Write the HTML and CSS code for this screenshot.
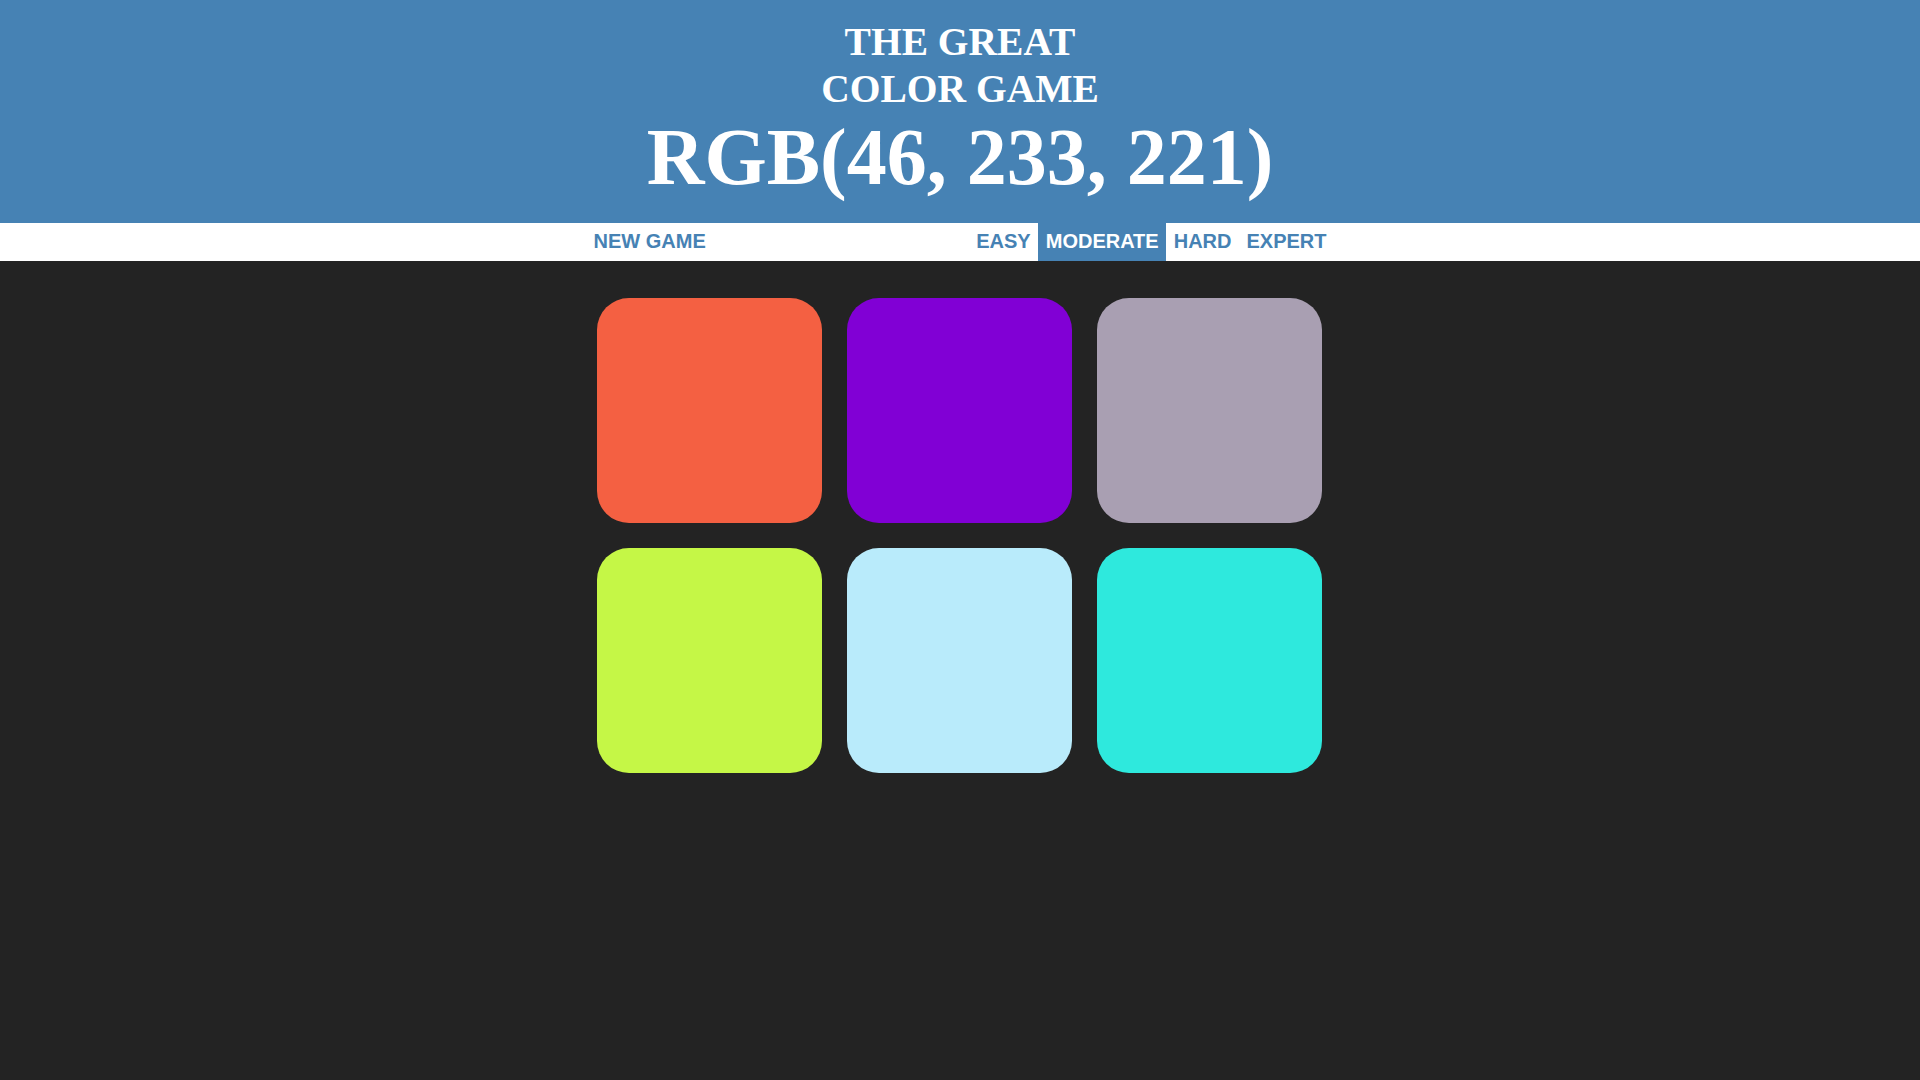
FILE: index.html
```html
<!DOCTYPE html>
<html lang="en">
<head>
<meta charset="utf-8">
<title>The Great Color Game</title>
<link rel="stylesheet" href="styles.css">
</head>
<body>
<header class="header">
  <h1 class="title">THE GREAT<br>COLOR GAME</h1>
  <div class="rgb">RGB(46, 233, 221)</div>
</header>
<nav class="stripe">
  <div class="stripe-inner">
    <button class="btn">NEW GAME</button>
    <span class="spacer"></span>
    <button class="btn">EASY</button>
    <button class="btn selected">MODERATE</button>
    <button class="btn">HARD</button>
    <button class="btn">EXPERT</button>
  </div>
</nav>
<main class="board">
  <div class="square sq-orange"></div>
  <div class="square sq-purple"></div>
  <div class="square sq-grey"></div>
  <div class="square sq-lime"></div>
  <div class="square sq-sky"></div>
  <div class="square sq-cyan"></div>
</main>
</body>
</html>
```
FILE: styles.css
```css
html, body {
  margin: 0;
  padding: 0;
}
body {
  background: #232323;
  min-height: 100vh;
}
.header {
  background: #4682b4;
  color: #ffffff;
  text-align: center;
  padding: 19px 0 22px;
  font-family: "Liberation Serif", "Times New Roman", serif;
  font-weight: bold;
}
.title {
  margin: 0;
  font-size: 39.5px;
  line-height: 47px;
  font-weight: bold;
}
.rgb {
  font-size: 80px;
  line-height: 88px;
}
.stripe {
  background: #ffffff;
  height: 38px;
}
.stripe-inner {
  width: 748px;
  margin: 0 auto;
  height: 38px;
  display: flex;
  align-items: stretch;
}
.spacer {
  flex: 1;
}
.btn {
  border: none;
  background: none;
  margin: 0;
  padding: 0 7.5px 2px;
  font-family: "Liberation Sans", Arial, sans-serif;
  font-weight: bold;
  font-size: 20px;
  line-height: 36px;
  height: 38px;
  color: #4682b4;
  cursor: pointer;
}
.btn.selected {
  background: #4682b4;
  color: #ffffff;
}
.board {
  width: 726px;
  margin: 37px auto 0;
  display: grid;
  grid-template-columns: repeat(3, 225px);
  gap: 25px;
}
.square {
  width: 225px;
  height: 225px;
  border-radius: 32px;
}
.sq-orange { background: #f46042; }
.sq-purple { background: #8100d5; }
.sq-grey { background: #a99fb2; }
.sq-lime { background: #c5f746; }
.sq-sky { background: #b9ebfb; }
.sq-cyan { background: #2ee9dd; }
```
